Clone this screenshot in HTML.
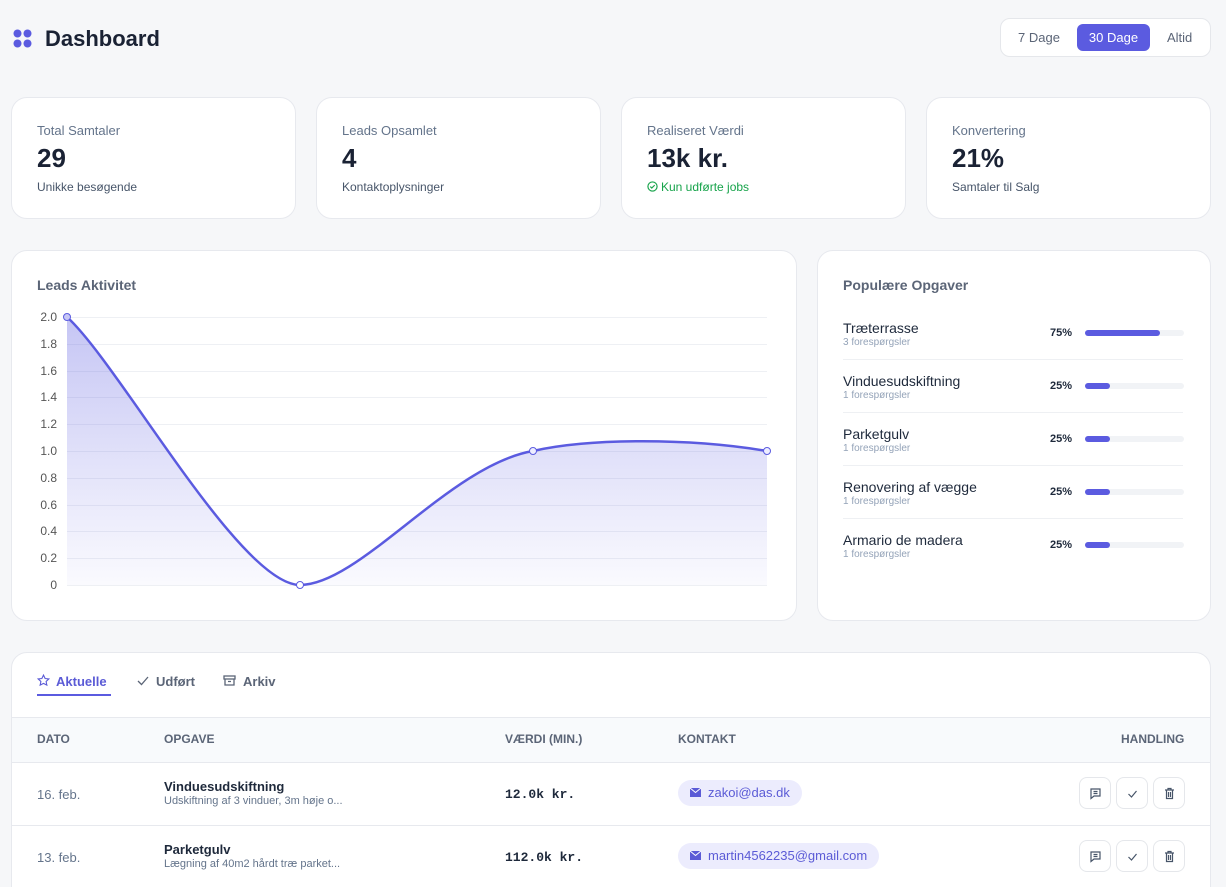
<!DOCTYPE html>
<html><head><meta charset="utf-8"><style>
*{box-sizing:border-box;margin:0;padding:0}
html,body{width:1226px;height:887px;overflow:hidden}
body{background:#f6f7f9;font-family:"Liberation Sans",sans-serif;color:#1e293b;position:relative}
.abs{position:absolute}
.card{position:absolute;background:#fff;border:1px solid #e7e9ee;border-radius:16px}
.lbl{font-size:13px;color:#64748b}
.big{font-size:26px;font-weight:700;color:#1a2234}
.sub{font-size:12px;color:#475569}
.ttl{font-size:14px;font-weight:700;color:#5b6577}
.ax{position:absolute;font-size:12px;color:#555;text-align:right;width:30px}
.row{position:absolute;left:26px;width:340px;height:53px;border-bottom:1px solid #eef0f3}
.row .n{position:absolute;left:0;top:13px;font-size:14px;color:#1e293b}
.row .c{position:absolute;left:0;top:30px;font-size:10px;color:#94a3b8}
.row .p{position:absolute;left:207px;top:20px;font-size:11px;font-weight:700;color:#1e293b}
.row .bar{position:absolute;left:242px;top:23px;width:99px;height:6px;border-radius:3px;background:#f1f3f6}
.row .bar i{display:block;height:6px;border-radius:3px;background:#5b5be0}
.th{position:absolute;top:732px;font-size:12px;color:#5b6577;font-weight:600}
.btn{position:absolute;width:32px;height:32px;border:1px solid #e5e7eb;border-radius:8px;background:#fff}
.btn svg{position:absolute;left:9px;top:9px}
.pill{position:absolute;height:26px;border-radius:13px;background:#ececfd;color:#5b5bd6;font-size:13px;line-height:26px;padding:0 12px 0 30px}
.pill svg{position:absolute;left:12px;top:8px}
</style></head><body>
<svg class="abs" style="left:13px;top:29px" width="19" height="19" viewBox="0 0 19 19" fill="#5b5be0"><circle cx="4.5" cy="4.5" r="4"/><circle cx="14.5" cy="4.5" r="4"/><circle cx="4.5" cy="14.5" r="4"/><circle cx="14.5" cy="14.5" r="4"/></svg>
<div class="abs" style="left:45px;top:26px;font-size:22px;font-weight:700;color:#1a2234">Dashboard</div>
<div class="abs" style="left:1000px;top:18px;width:211px;height:39px;background:#fff;border:1px solid #e5e7eb;border-radius:10px"></div>
<div class="abs" style="left:1018px;top:30px;font-size:13px;color:#5b6577">7 Dage</div>
<div class="abs" style="left:1077px;top:24px;width:73px;height:27px;background:#5b5be0;border-radius:6px;color:#fff;font-size:13px;text-align:center;line-height:27px">30 Dage</div>
<div class="abs" style="left:1167px;top:30px;font-size:13px;color:#5b6577">Altid</div>

<div class="card" style="left:11px;top:97px;width:285px;height:122px"></div>
<div class="card" style="left:316px;top:97px;width:285px;height:122px"></div>
<div class="card" style="left:621px;top:97px;width:285px;height:122px"></div>
<div class="card" style="left:926px;top:97px;width:285px;height:122px"></div>
<div class="abs lbl" style="left:37px;top:123px">Total Samtaler</div>
<div class="abs big" style="left:37px;top:143px">29</div>
<div class="abs sub" style="left:37px;top:180px">Unikke besøgende</div>
<div class="abs lbl" style="left:342px;top:123px">Leads Opsamlet</div>
<div class="abs big" style="left:342px;top:143px">4</div>
<div class="abs sub" style="left:342px;top:180px">Kontaktoplysninger</div>
<div class="abs lbl" style="left:647px;top:123px">Realiseret Værdi</div>
<div class="abs big" style="left:647px;top:143px">13k kr.</div>
<div class="abs sub" style="left:647px;top:180px;color:#16a34a"><svg width="11" height="11" viewBox="0 0 12 12" style="vertical-align:-1px;margin-right:3px"><circle cx="6" cy="6" r="5" fill="none" stroke="#16a34a" stroke-width="1.3"/><path d="M3.6 6.1l1.6 1.6 3.2-3.2" fill="none" stroke="#16a34a" stroke-width="1.3"/></svg>Kun udførte jobs</div>
<div class="abs lbl" style="left:952px;top:123px">Konvertering</div>
<div class="abs big" style="left:952px;top:143px">21%</div>
<div class="abs sub" style="left:952px;top:180px">Samtaler til Salg</div>

<div class="card" style="left:11px;top:250px;width:786px;height:371px"></div>
<div class="abs ttl" style="left:37px;top:277px">Leads Aktivitet</div>
<div class="ax" style="left:27px;top:310px">2.0</div>
<div class="ax" style="left:27px;top:337px">1.8</div>
<div class="ax" style="left:27px;top:364px">1.6</div>
<div class="ax" style="left:27px;top:390px">1.4</div>
<div class="ax" style="left:27px;top:417px">1.2</div>
<div class="ax" style="left:27px;top:444px">1.0</div>
<div class="ax" style="left:27px;top:471px">0.8</div>
<div class="ax" style="left:27px;top:498px">0.6</div>
<div class="ax" style="left:27px;top:524px">0.4</div>
<div class="ax" style="left:27px;top:551px">0.2</div>
<div class="ax" style="left:27px;top:578px">0</div>
<svg class="abs" style="left:0;top:0" width="800" height="620">
<defs><linearGradient id="g" x1="0" y1="317" x2="0" y2="585" gradientUnits="userSpaceOnUse"><stop offset="0" stop-color="#5b5be0" stop-opacity=".35"/><stop offset="1" stop-color="#5b5be0" stop-opacity=".03"/></linearGradient></defs>
<g stroke="#eef0f4" stroke-width="1">
<line x1="67" x2="767" y1="317.5" y2="317.5"/><line x1="67" x2="767" y1="344.5" y2="344.5"/><line x1="67" x2="767" y1="371.5" y2="371.5"/><line x1="67" x2="767" y1="397.5" y2="397.5"/><line x1="67" x2="767" y1="424.5" y2="424.5"/><line x1="67" x2="767" y1="451.5" y2="451.5"/><line x1="67" x2="767" y1="478.5" y2="478.5"/><line x1="67" x2="767" y1="505.5" y2="505.5"/><line x1="67" x2="767" y1="531.5" y2="531.5"/><line x1="67" x2="767" y1="558.5" y2="558.5"/><line x1="67" x2="767" y1="585.5" y2="585.5"/></g>
<path d="M67 317C120 365 240 585 300 585C360 585 450 465 533 451C590 438 690 438 767 451L767 585L67 585Z" fill="url(#g)"/>
<path d="M67 317C120 365 240 585 300 585C360 585 450 465 533 451C590 438 690 438 767 451" fill="none" stroke="#5b5be0" stroke-width="2.5"/>
<g fill="#c7c7f5" stroke="#5b5be0" stroke-width="1"><circle cx="67" cy="317" r="3.5"/><circle cx="300" cy="585" r="3.5" fill="#fff"/><circle cx="533" cy="451" r="3.5" fill="#eef"/><circle cx="767" cy="451" r="3.5" fill="#eef"/></g>
</svg>

<div class="card" style="left:817px;top:250px;width:394px;height:371px"></div>
<div class="abs ttl" style="left:843px;top:277px">Populære Opgaver</div>
<div class="abs" style="left:817px;top:307px">
<div class="row" style="top:0"><div class="n">Træterrasse</div><div class="c">3 forespørgsler</div><div class="p">75%</div><div class="bar"><i style="width:75px"></i></div></div>
<div class="row" style="top:53px"><div class="n">Vinduesudskiftning</div><div class="c">1 forespørgsler</div><div class="p">25%</div><div class="bar"><i style="width:25px"></i></div></div>
<div class="row" style="top:106px"><div class="n">Parketgulv</div><div class="c">1 forespørgsler</div><div class="p">25%</div><div class="bar"><i style="width:25px"></i></div></div>
<div class="row" style="top:159px"><div class="n">Renovering af vægge</div><div class="c">1 forespørgsler</div><div class="p">25%</div><div class="bar"><i style="width:25px"></i></div></div>
<div class="row" style="top:212px;border:none"><div class="n">Armario de madera</div><div class="c">1 forespørgsler</div><div class="p">25%</div><div class="bar"><i style="width:25px"></i></div></div>
</div>

<div class="card" style="left:11px;top:652px;width:1200px;height:260px;overflow:hidden">
<div class="abs" style="left:0;top:64px;width:1200px;height:46px;background:#f8fafc;border-top:1px solid #e7e9ee;border-bottom:1px solid #e7e9ee"></div>
<div class="abs" style="left:0;top:172px;width:1200px;border-top:1px solid #e7e9ee"></div>
</div>
<svg class="abs" style="left:37px;top:674px" width="13" height="13" viewBox="0 0 24 24" fill="none" stroke="#5b5bd6" stroke-width="2"><path d="M12 2l3 6.3 6.9.8-5.1 4.7 1.4 6.8L12 17.3 5.8 20.6l1.4-6.8L2.1 9.1 9 8.3z"/></svg>
<div class="abs" style="left:56px;top:674px;font-size:13px;font-weight:700;color:#5b5bd6">Aktuelle</div>
<div class="abs" style="left:37px;top:694px;width:74px;height:2px;background:#5b5be0"></div>
<svg class="abs" style="left:137px;top:676px" width="12" height="10" viewBox="0 0 12 10" fill="none" stroke="#5b6577" stroke-width="1.3"><path d="M1 5l3.5 3.5L11 1"/></svg>
<div class="abs" style="left:156px;top:674px;font-size:13px;font-weight:700;color:#5b6577">Udført</div>
<svg class="abs" style="left:223px;top:675px" width="13" height="11" viewBox="0 0 13 11" fill="none" stroke="#5b6577" stroke-width="1.3"><rect x="1" y="1" width="11" height="3"/><path d="M2 4v6h9V4M5 6.5h3"/></svg>
<div class="abs" style="left:243px;top:674px;font-size:13px;font-weight:700;color:#5b6577">Arkiv</div>
<div class="th" style="left:37px">DATO</div>
<div class="th" style="left:164px">OPGAVE</div>
<div class="th" style="left:505px">VÆRDI (MIN.)</div>
<div class="th" style="left:678px">KONTAKT</div>
<div class="th" style="left:1121px">HANDLING</div>

<div class="abs" style="left:37px;top:787px;font-size:13px;color:#64748b">16. feb.</div>
<div class="abs" style="left:164px;top:779px;font-size:13px;font-weight:700">Vinduesudskiftning</div>
<div class="abs" style="left:164px;top:795px;font-size:11px;color:#64748b">Udskiftning af 3 vinduer, 3m høje o...</div>
<div class="abs" style="left:505px;top:787px;font-size:13px;font-weight:700;font-family:'Liberation Mono',monospace">12.0k kr.</div>
<div class="pill" style="left:678px;top:780px"><svg width="11" height="9" viewBox="0 0 11 9"><rect width="11" height="9" fill="#5b5bd6"/><path d="M0 0l5.5 4.5L11 0" fill="none" stroke="#fff" stroke-width="1"/></svg>zakoi@das.dk</div>
<div class="abs" style="left:37px;top:850px;font-size:13px;color:#64748b">13. feb.</div>
<div class="abs" style="left:164px;top:842px;font-size:13px;font-weight:700">Parketgulv</div>
<div class="abs" style="left:164px;top:858px;font-size:11px;color:#64748b">Lægning af 40m2 hårdt træ parket...</div>
<div class="abs" style="left:505px;top:850px;font-size:13px;font-weight:700;font-family:'Liberation Mono',monospace">112.0k kr.</div>
<div class="pill" style="left:678px;top:843px"><svg width="11" height="9" viewBox="0 0 11 9"><rect width="11" height="9" fill="#5b5bd6"/><path d="M0 0l5.5 4.5L11 0" fill="none" stroke="#fff" stroke-width="1"/></svg>martin4562235@gmail.com</div>

<div class="btn" style="left:1079px;top:777px"><svg width="13" height="13" viewBox="0 0 13 13" fill="none" stroke="#475569" stroke-width="1.2"><path d="M2 2h9v7H5l-3 2.5z M4.5 4.5h4M4.5 6.5h4"/></svg></div>
<div class="btn" style="left:1116px;top:777px"><svg width="13" height="13" viewBox="0 0 13 13" fill="none" stroke="#475569" stroke-width="1.2"><path d="M2.5 7l3 3 5-6"/></svg></div>
<div class="btn" style="left:1153px;top:777px"><svg width="13" height="13" viewBox="0 0 13 13" fill="none" stroke="#475569" stroke-width="1.2"><path d="M2 3h9M5 3V1.5h3V3M3.5 3v8.5h6V3M5.5 5v5M7.5 5v5"/></svg></div>
<div class="btn" style="left:1079px;top:840px"><svg width="13" height="13" viewBox="0 0 13 13" fill="none" stroke="#475569" stroke-width="1.2"><path d="M2 2h9v7H5l-3 2.5z M4.5 4.5h4M4.5 6.5h4"/></svg></div>
<div class="btn" style="left:1116px;top:840px"><svg width="13" height="13" viewBox="0 0 13 13" fill="none" stroke="#475569" stroke-width="1.2"><path d="M2.5 7l3 3 5-6"/></svg></div>
<div class="btn" style="left:1153px;top:840px"><svg width="13" height="13" viewBox="0 0 13 13" fill="none" stroke="#475569" stroke-width="1.2"><path d="M2 3h9M5 3V1.5h3V3M3.5 3v8.5h6V3M5.5 5v5M7.5 5v5"/></svg></div>
</body></html>
